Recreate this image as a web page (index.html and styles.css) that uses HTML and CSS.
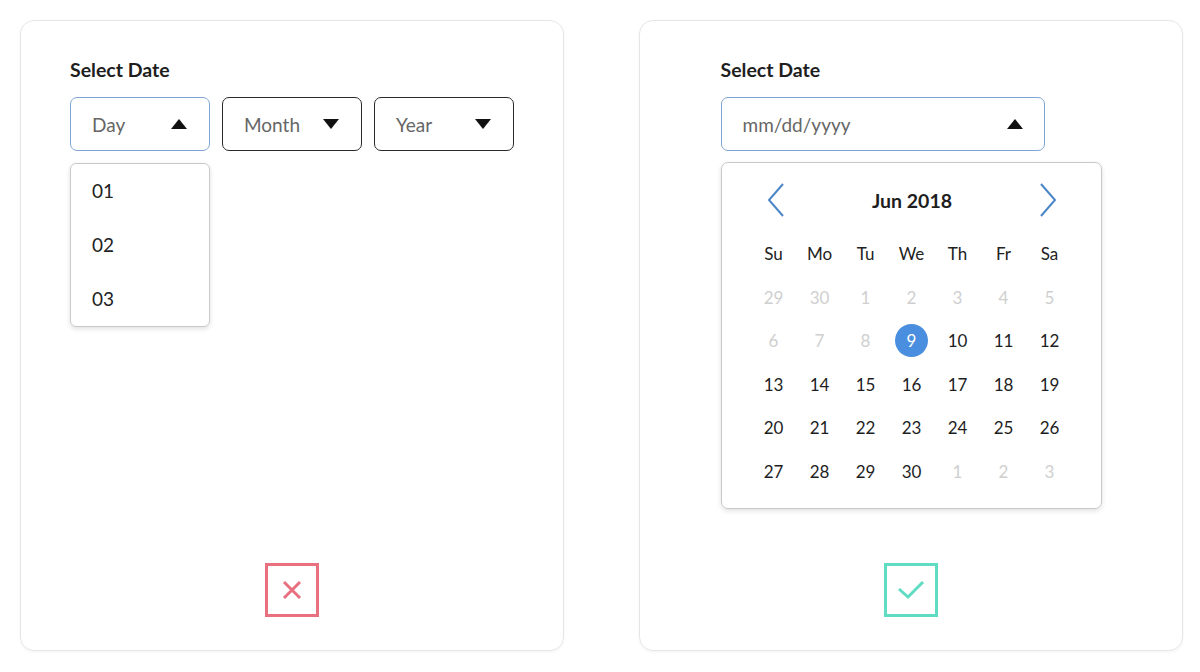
FILE: index.html
```html
<!DOCTYPE html>
<html lang="en">
<head>
    <meta charset="UTF-8">
    <title>Select Date</title>
    <link rel="stylesheet" href="styles.css">
</head>
<body>
    <!-- Don't: three separate dropdowns -->
    <div class="card">
        <div class="content">
            <div class="label">Select Date</div>
            <div class="fields">
                <div class="field-col">
                    <div class="select active">
                        <span>Day</span>
                        <span class="arrow up"></span>
                    </div>
                    <ul class="options">
                        <li>01</li>
                        <li>02</li>
                        <li>03</li>
                    </ul>
                </div>
                <div class="select">
                    <span>Month</span>
                    <span class="arrow down"></span>
                </div>
                <div class="select">
                    <span>Year</span>
                    <span class="arrow down"></span>
                </div>
            </div>
        </div>
        <div class="mark bad">
            <svg width="22" height="22" viewBox="0 0 22 22">
                <path d="M3 3 L19 19 M19 3 L3 19" stroke="#e9717f" stroke-width="3" fill="none"/>
            </svg>
        </div>
    </div>

    <!-- Do: one input with a calendar -->
    <div class="card">
        <div class="content">
            <div class="label">Select Date</div>
            <div class="select active wide">
                <span>mm/dd/yyyy</span>
                <span class="arrow up"></span>
            </div>
            <div class="calendar">
                <div class="cal-head">
                    <svg class="chev" width="18" height="34" viewBox="0 0 18 34">
                        <path d="M16 1 L2 17 L16 33" stroke="#4a86c8" stroke-width="2" fill="none"/>
                    </svg>
                    <span class="cal-title">Jun 2018</span>
                    <svg class="chev" width="18" height="34" viewBox="0 0 18 34">
                        <path d="M2 1 L16 17 L2 33" stroke="#4a86c8" stroke-width="2" fill="none"/>
                    </svg>
                </div>
                <div class="cal-grid">
                    <span class="wd">Su</span><span class="wd">Mo</span><span class="wd">Tu</span><span class="wd">We</span><span class="wd">Th</span><span class="wd">Fr</span><span class="wd">Sa</span>
                    <span class="muted">29</span><span class="muted">30</span><span class="muted">1</span><span class="muted">2</span><span class="muted">3</span><span class="muted">4</span><span class="muted">5</span>
                    <span class="muted">6</span><span class="muted">7</span><span class="muted">8</span><span><b class="picked">9</b></span><span>10</span><span>11</span><span>12</span>
                    <span>13</span><span>14</span><span>15</span><span>16</span><span>17</span><span>18</span><span>19</span>
                    <span>20</span><span>21</span><span>22</span><span>23</span><span>24</span><span>25</span><span>26</span>
                    <span>27</span><span>28</span><span>29</span><span>30</span><span class="muted">1</span><span class="muted">2</span><span class="muted">3</span>
                </div>
            </div>
        </div>
        <div class="mark good">
            <svg width="30" height="22" viewBox="0 0 30 22">
                <path d="M3 10 L12 18 L27 3" stroke="#5fdcc2" stroke-width="3" fill="none"/>
            </svg>
        </div>
    </div>
</body>
</html>
```
FILE: styles.css
```css
body {
    font-family: Lato, "Open Sans", sans-serif;
    margin: 0;
    padding: 20px;
    background-color: #ffffff;
    color: #222;
    display: flex;
    gap: 75px;
}
.card {
    flex-shrink: 0;
    width: 544px;
    height: 631px;
    box-sizing: border-box;
    border: 1px solid #e6e6e6;
    border-radius: 14px;
    box-shadow: 0 1px 3px rgba(0,0,0,0.05);
    padding: 37px 0 33px;
    display: flex;
    flex-direction: column;
    align-items: center;
}
.content {
    display: flex;
    flex-direction: column;
}
.label {
    font-size: 19.5px;
    font-weight: bold;
    line-height: 24px;
    color: #1e1e1e;
    margin-bottom: 15px;
}
.fields {
    display: flex;
    gap: 12px;
    align-items: flex-start;
}
.field-col {
    display: flex;
    flex-direction: column;
    gap: 12px;
}
.select {
    width: 140px;
    height: 54px;
    box-sizing: border-box;
    border: 1.5px solid #2b2b2b;
    border-radius: 7px;
    display: flex;
    align-items: center;
    justify-content: space-between;
    padding: 0 22px 0 21px;
    font-size: 19px;
    color: #666;
}
.select.active {
    border-color: #7ea6d3;
}
.select.wide {
    width: 324px;
    padding-right: 21px;
}
.arrow {
    width: 0;
    height: 0;
    border-left: 8px solid transparent;
    border-right: 8px solid transparent;
}
.arrow.up {
    border-bottom: 10px solid #111;
}
.arrow.down {
    border-top: 10px solid #111;
}
.options {
    list-style: none;
    margin: 0;
    padding: 0;
    width: 140px;
    box-sizing: border-box;
    border: 1px solid #c9c9c9;
    border-radius: 6px;
    box-shadow: 0 2px 5px rgba(0,0,0,0.12);
}
.options li {
    height: 54px;
    line-height: 54px;
    padding-left: 21px;
    font-size: 19px;
    color: #222;
}
.calendar {
    margin-top: 11px;
    width: 381px;
    box-sizing: border-box;
    border: 1.5px solid #c8c8c8;
    border-radius: 7px;
    box-shadow: 0 2px 5px rgba(0,0,0,0.12);
    padding: 15px 29px 15px;
}
.cal-head {
    height: 44px;
    display: flex;
    align-items: center;
    justify-content: space-between;
    padding: 0 14px 0 16px;
    margin-bottom: 10px;
}
.cal-title {
    font-size: 19.5px;
    font-weight: bold;
    color: #1e1e1e;
}
.cal-grid {
    display: grid;
    grid-template-columns: repeat(7, 46px);
    grid-auto-rows: 43.5px;
}
.cal-grid span {
    display: flex;
    align-items: center;
    justify-content: center;
    font-size: 17px;
    color: #1e1e1e;
}
.cal-grid .wd {
    color: #222;
}
.cal-grid .muted {
    color: #cfcfcf;
}
.picked {
    width: 33px;
    height: 33px;
    border-radius: 50%;
    background-color: #4a8fdf;
    color: white;
    font-weight: normal;
    display: flex;
    align-items: center;
    justify-content: center;
}
.mark {
    margin-top: auto;
    width: 54px;
    height: 54px;
    box-sizing: border-box;
    border: 3px solid;
    display: flex;
    align-items: center;
    justify-content: center;
}
.mark.bad {
    border-color: #e9717f;
}
.mark.good {
    border-color: #5fdcc2;
}
```
